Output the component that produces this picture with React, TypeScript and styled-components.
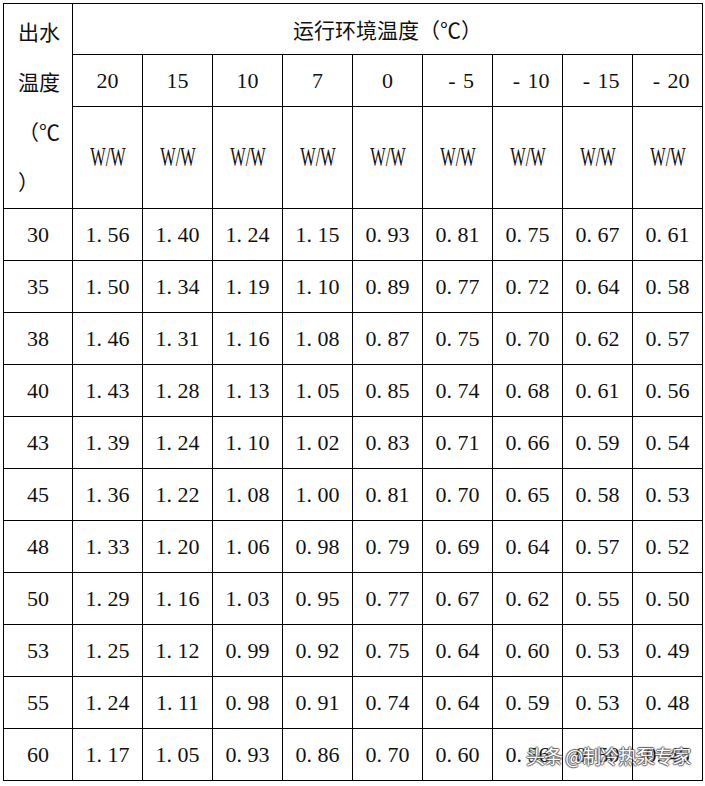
import React from 'react';
import styled, {createGlobalStyle} from 'styled-components';

const Global = createGlobalStyle`
    body {
        margin: 0;
        background: #fff;
    }
`;

const Page = styled.div`
    position: relative;
    width: 705px;
    height: 786px;
    padding: 3px 0 0 3px;
    box-sizing: border-box;
`;

const Table = styled.table`
    border-collapse: collapse;
    table-layout: fixed;
    width: 700px;
    font-family: "Liberation Serif", "Noto Sans CJK SC", serif;
    font-size: 22px;
    color: #111;
    td {
        border: 1px solid #000;
        text-align: center;
        vertical-align: middle;
        padding: 0;
        overflow: hidden;
    }
`;

const Row = styled.tr<{$h: number}>`
    height: ${p => p.$h}px;
`;

const SideHead = styled.td`
    font-family: "Noto Sans CJK SC", sans-serif;
    font-size: 21px;
    line-height: 50px;
    text-align: left !important;
    padding-left: 14px !important;
`;

const TopHead = styled.td`
    font-family: "Noto Sans CJK SC", sans-serif;
    font-size: 21px;
`;

// full-width minus: a short dash centred in a 1em box
const Minus = styled.span`
    display: inline-block;
    width: 1em;
    text-align: center;
`;

const Unit = styled.span`
    display: inline-block;
    font-size: 24px;
    transform: scale(0.68, 1.1);
`;

const Watermark = styled.div`
    position: absolute;
    left: 526px;
    top: 742px;
    font-family: "Noto Sans CJK SC", sans-serif;
    font-size: 19px;
    color: #fff;
    letter-spacing: -1px;
    text-shadow: 1px 0 1px #444, -1px 0 1px #444, 0 1px 1px #444, 0 -1px 1px #444;
    opacity: 0.85;
`;

const temps = ['20', '15', '10', '7', '0', '-5', '-10', '-15', '-20'];

const rows: [string, string[]][] = [
    ['30', ['1.56', '1.40', '1.24', '1.15', '0.93', '0.81', '0.75', '0.67', '0.61']],
    ['35', ['1.50', '1.34', '1.19', '1.10', '0.89', '0.77', '0.72', '0.64', '0.58']],
    ['38', ['1.46', '1.31', '1.16', '1.08', '0.87', '0.75', '0.70', '0.62', '0.57']],
    ['40', ['1.43', '1.28', '1.13', '1.05', '0.85', '0.74', '0.68', '0.61', '0.56']],
    ['43', ['1.39', '1.24', '1.10', '1.02', '0.83', '0.71', '0.66', '0.59', '0.54']],
    ['45', ['1.36', '1.22', '1.08', '1.00', '0.81', '0.70', '0.65', '0.58', '0.53']],
    ['48', ['1.33', '1.20', '1.06', '0.98', '0.79', '0.69', '0.64', '0.57', '0.52']],
    ['50', ['1.29', '1.16', '1.03', '0.95', '0.77', '0.67', '0.62', '0.55', '0.50']],
    ['53', ['1.25', '1.12', '0.99', '0.92', '0.75', '0.64', '0.60', '0.53', '0.49']],
    ['55', ['1.24', '1.11', '0.98', '0.91', '0.74', '0.64', '0.59', '0.53', '0.48']],
    ['60', ['1.17', '1.05', '0.93', '0.86', '0.70', '0.60', '0.56', '0.50', '0.46']],
];

// the source spaces the decimal point like a full-width cell
const fmt = (v: string) => v.replace('.', '. ');

const Temp = ({t}: {t: string}) =>
    t.startsWith('-') ? <><Minus>-</Minus>{t.slice(1)}</> : <>{t}</>;

export default function App() {
    return (
        <Page>
            <Global />
            <Table>
                <colgroup>
                    <col style={{width: 69}} />
                    {temps.map(t => <col key={t} style={{width: 70}} />)}
                </colgroup>
                <tbody>
                    <Row $h={51}>
                        <SideHead rowSpan={3}>
                            出水<br />温度<br />（℃<br />）
                        </SideHead>
                        <TopHead colSpan={9}>运行环境温度（℃）</TopHead>
                    </Row>
                    <Row $h={52}>
                        {temps.map(t => <td key={t}><Temp t={t} /></td>)}
                    </Row>
                    <Row $h={102}>
                        {temps.map(t => <td key={t}><Unit>W/W</Unit></td>)}
                    </Row>
                    {rows.map(([label, vals]) => (
                        <Row $h={52} key={label}>
                            <td>{label}</td>
                            {vals.map((v, i) => <td key={i}>{fmt(v)}</td>)}
                        </Row>
                    ))}
                </tbody>
            </Table>
            <Watermark>头条 @制冷热泵专家</Watermark>
        </Page>
    );
}
